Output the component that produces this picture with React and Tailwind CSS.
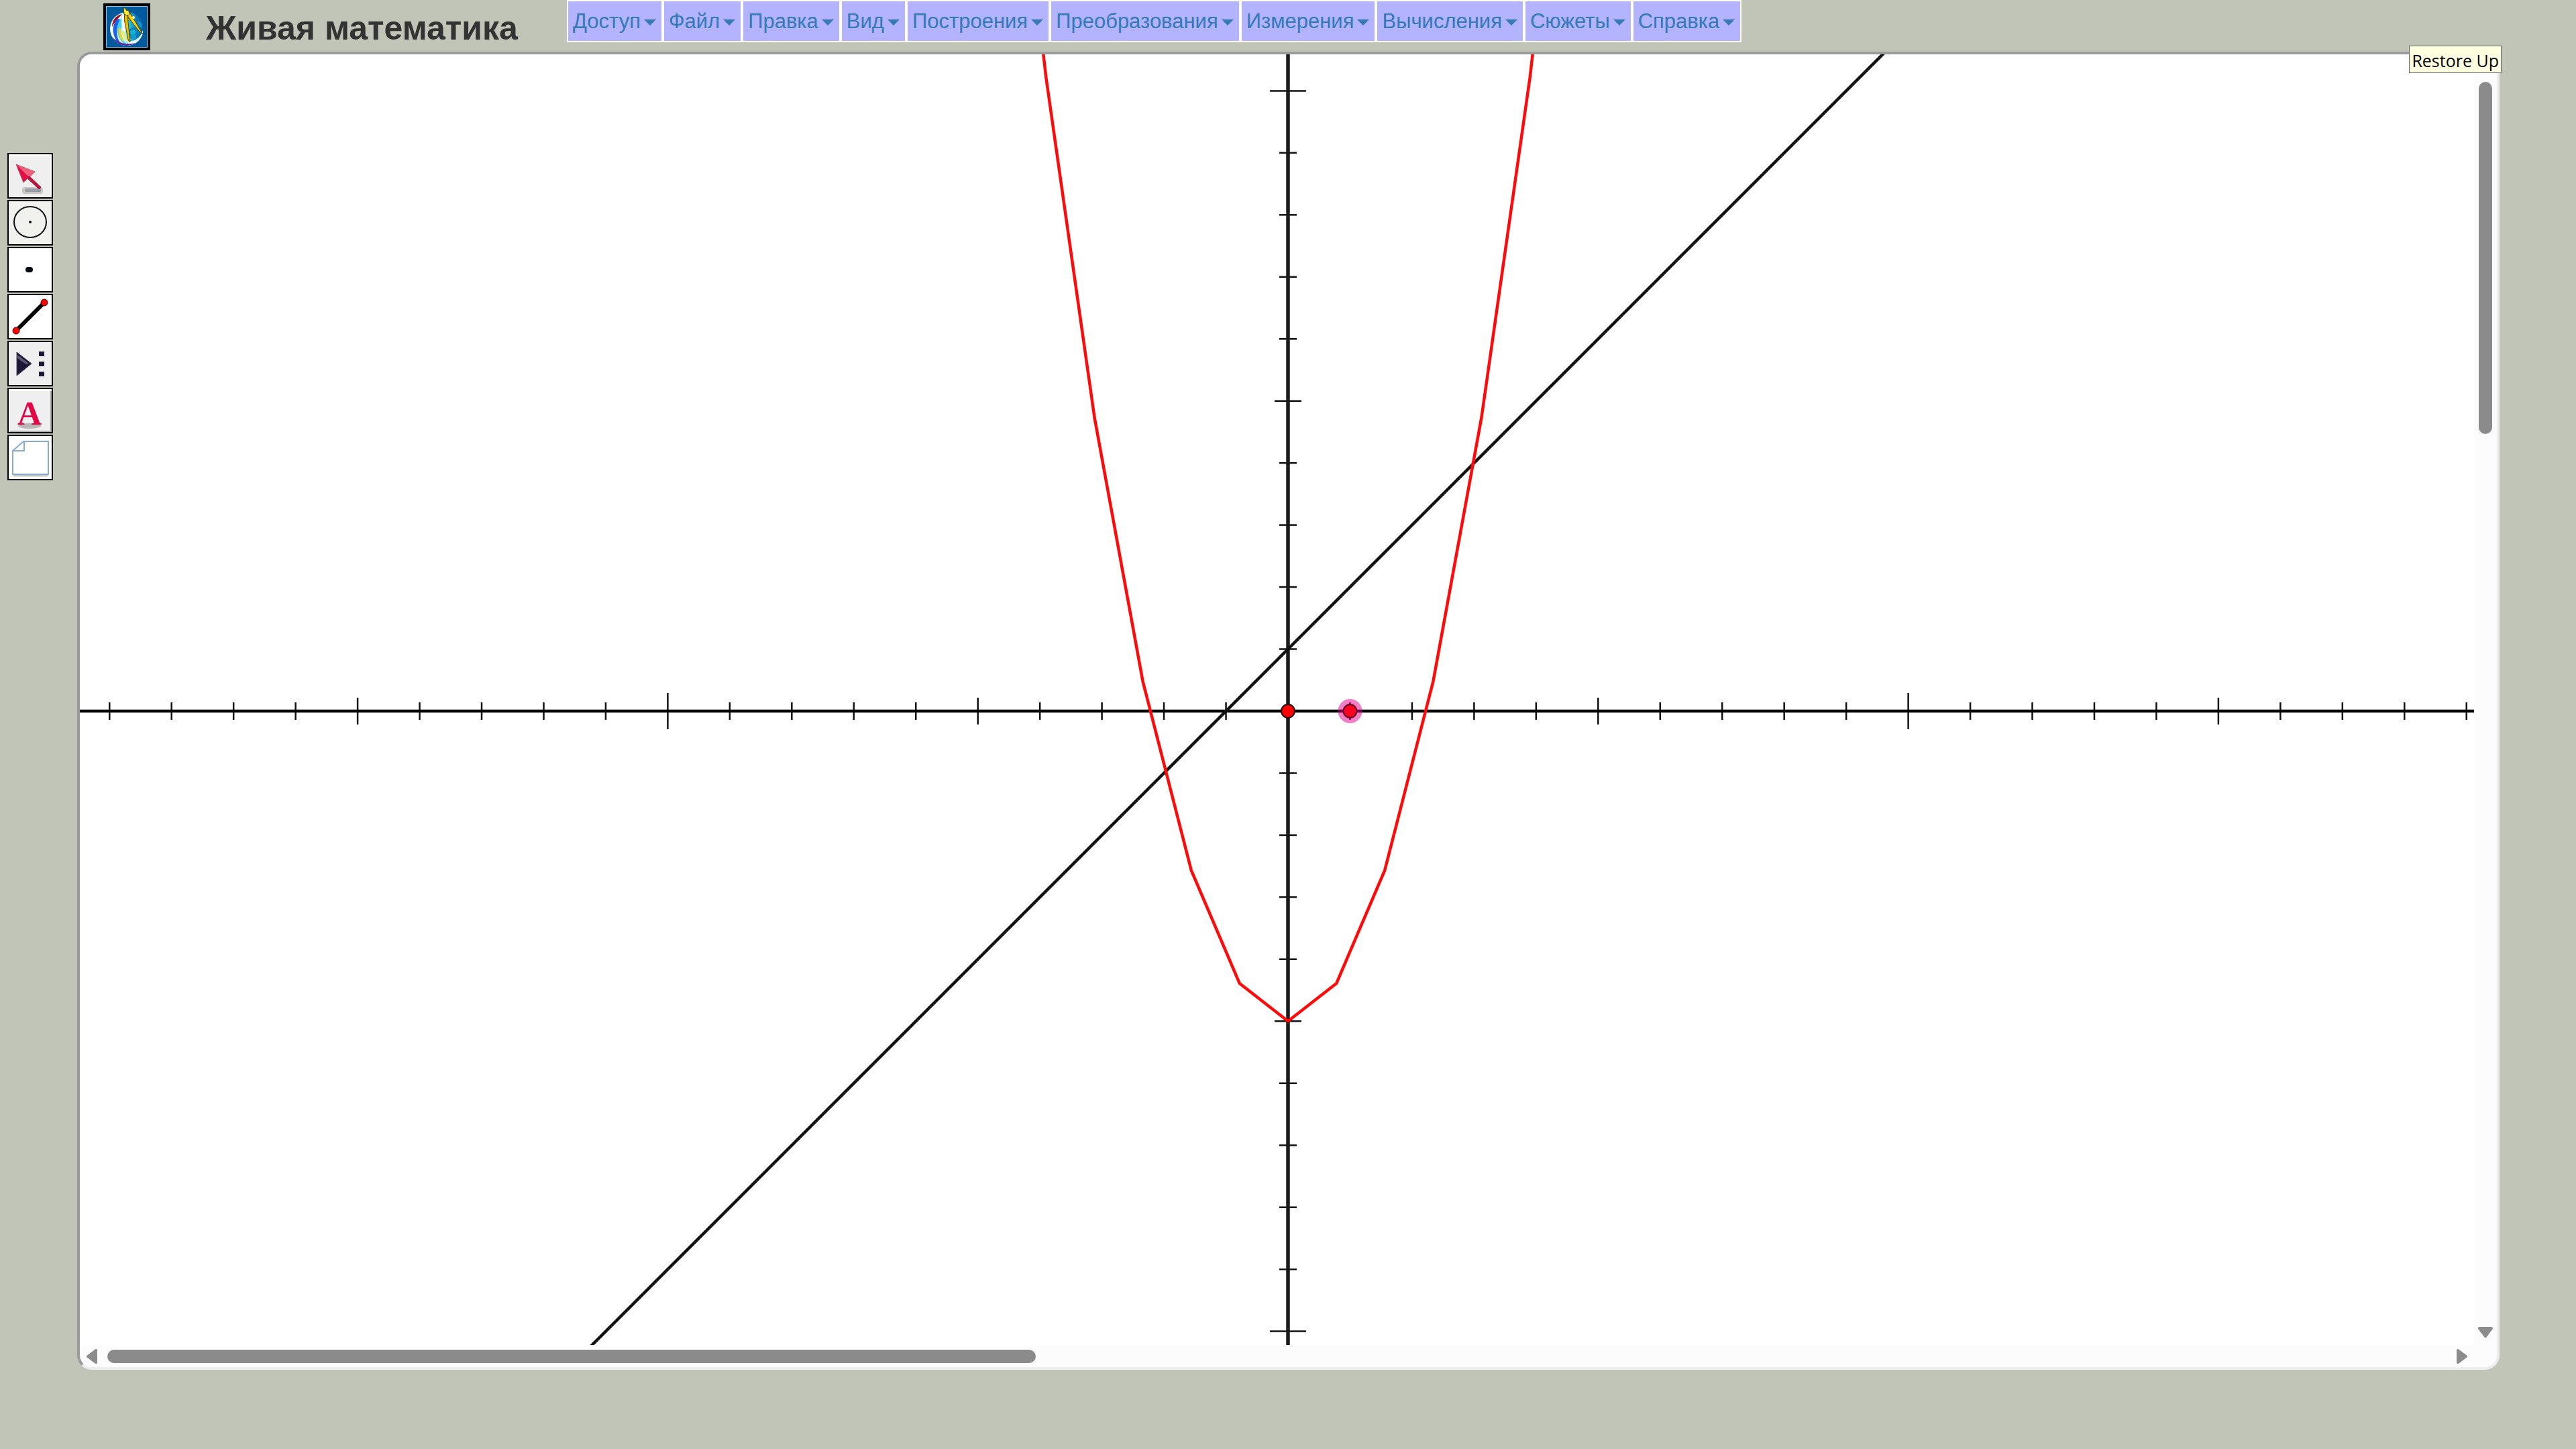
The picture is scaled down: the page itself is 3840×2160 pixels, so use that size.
import React from 'react';

const MENUS = ['Доступ', 'Файл', 'Правка', 'Вид', 'Построения', 'Преобразования', 'Измерения', 'Вычисления', 'Сюжеты', 'Справка'];

// Plane geometry, in sketch pixels
const WIDTH = 3569;
const HEIGHT = 1924;
const ORIGIN = { x: 1801, y: 979 };
const UNIT = 92.46;

const toX = (x) => ORIGIN.x + x * UNIT;
const toY = (y) => ORIGIN.y - y * UNIT;

const range = (from, to) => Array.from({ length: to - from + 1 }, (_, i) => from + i);

const tickSize = (n) => {
  if (n % 10 === 0) return 27;
  if (n % 5 === 0) return 20;
  return 13;
};

const PARABOLA = range(-6, 6)
  .map((k) => k * 0.78)
  .map((x) => `${toX(x)},${toY(x * x - 5)}`)
  .join(' ');

function Graph() {
  return (
    <svg viewBox={`0 0 ${WIDTH} ${HEIGHT}`} className="block w-full h-full" role="img" aria-label="y = x² − 5, y = x + 1">
      <g stroke="#111" strokeWidth="2.5">
        {range(-19, 19).filter((n) => n !== 0).map((n) => (
          <line key={n} x1={toX(n)} x2={toX(n)} y1={ORIGIN.y - tickSize(n)} y2={ORIGIN.y + tickSize(n)} />
        ))}
        {range(-10, 10).filter((n) => n !== 0).map((n) => (
          <line key={n} x1={ORIGIN.x - tickSize(n)} x2={ORIGIN.x + tickSize(n)} y1={toY(n)} y2={toY(n)} />
        ))}
      </g>
      <line x1="0" x2={WIDTH} y1={ORIGIN.y} y2={ORIGIN.y} stroke="#000" strokeWidth="4.5" />
      <line x1={ORIGIN.x} x2={ORIGIN.x} y1="0" y2={HEIGHT} stroke="#1a1a1a" strokeWidth="5.5" />
      <line x1={toX(-12)} y1={toY(-11)} x2={toX(11)} y2={toY(12)} stroke="#111" strokeWidth="4.5" />
      <polyline points={PARABOLA} fill="none" stroke="#ff0a0a" strokeWidth="4.5" strokeLinejoin="round" />
      <circle cx={ORIGIN.x} cy={ORIGIN.y} r="10" fill="#f00" stroke="#200" strokeWidth="2" />
      {/* Selected unit point */}
      <circle cx={toX(1)} cy={ORIGIN.y} r="10" fill="#f02" stroke="#300" strokeWidth="2" />
      <circle cx={toX(1)} cy={ORIGIN.y} r="14" fill="none" stroke="#e6008c" strokeOpacity="0.5" strokeWidth="8" />
    </svg>
  );
}

function Logo() {
  return (
    <svg viewBox="0 0 62 62" className="block w-full h-full" aria-hidden="true">
      <defs>
        <clipPath id="ball-clip">
          <circle cx="31" cy="34" r="25" />
        </clipPath>
        <linearGradient id="ball" x1="0" y1="0.4" x2="1" y2="0.3">
          <stop offset="0" stopColor="#fff" />
          <stop offset="0.4" stopColor="#c8f4fa" />
          <stop offset="0.6" stopColor="#22b4dc" />
          <stop offset="0.85" stopColor="#0a6fb0" />
          <stop offset="1" stopColor="#005a9c" />
        </linearGradient>
      </defs>
      <rect width="62" height="62" fill="#005a9c" />
      <rect x="0.5" y="0.5" width="61" height="61" fill="none" stroke="#8cc4e8" />
      <g clipPath="url(#ball-clip)">
        <rect x="6" y="9" width="50" height="50" fill="url(#ball)" />
        <path d="M20 13C12 17 9 24 9 31C13 23 18 19 24 12Z" fill="#a01020" />
        <path d="M17 19C9 27 8 42 17 53L22 56C15 46 14 34 21 20Z" fill="#1c62f0" />
        <path d="M21 20C14 32 16 46 26 56L30 56C22 47 20 36 27 18Z" fill="#40d4f0" />
        <path d="M19 33C18 42 21 50 27 54C24 46 22 41 22 33Z" fill="#f8d020" />
        <path d="M24 38C24 46 28 52 36 54C31 48 28 44 27 36Z" fill="#e8f070" />
        <path d="M26 12C22 20 22 28 27 38L30 36L28 12Z" fill="#fff" />
        <path d="M32 52C44 54 52 46 55 36C57 48 48 60 34 59Z" fill="#e6fbfa" />
        <path d="M9 46C14 60 34 62 44 55C34 58 20 57 9 46Z" fill="#5a1fa0" />
        <circle cx="41" cy="41" r="9" fill="#0a7cba" />
        <circle cx="40" cy="39" r="4" fill="#14b4d6" />
        <circle cx="41" cy="46" r="4" fill="#109ccc" />
        <path d="M47 22L53 25L54 33L49 30Z" fill="#1590cc" />
      </g>
      <path d="M27 23L42 16" stroke="#4d4300" strokeWidth="3" />
      <path d="M27 23L42 16" stroke="#ffe21a" strokeWidth="1.5" />
      <path d="M29 10L35 9L44 24L55 42L49 37L38 23Z" fill="#f5d50a" stroke="#4d4300" strokeWidth="1" />
      <path d="M27 9L32 10L33 24L36 53L35 54L33 50L28 24Z" fill="#e8c408" stroke="#4d4300" strokeWidth="1" />
      <path d="M26 3L29 3L30 6L34 7L35 13L31 14L27 12Z" fill="#ffe83a" stroke="#4d4300" strokeWidth="1" />
      <circle cx="41" cy="17" r="2" fill="#fff7b0" />
    </svg>
  );
}

const TOOLS = [
  {
    name: 'Стрелка',
    art: (
      <>
        <rect width="64" height="64" fill="#fff" />
        <rect x="2" y="3" width="60" height="59" fill="#efefef" />
        <rect x="20" y="49" width="31" height="10" rx="4" fill="#c9c6c2" />
        <rect x="24" y="51" width="24" height="5" rx="2" fill="#9a9cab" />
        <path d="M29 31L48 49L46 52L43 50L27 35Z" fill="#c8103f" stroke="#7d2038" strokeWidth="1" />
        <path d="M11 15L39 26L33 32L28 36L22 42Z" fill="#e40d45" stroke="#b04a60" strokeWidth="1" />
        <path d="M11 15L39 26L33 32L28 32Z" fill="#f2607c" />
      </>
    ),
  },
  {
    name: 'Циркуль',
    art: (
      <>
        <rect width="64" height="64" fill="#f1f2ed" />
        <ellipse cx="32" cy="31" rx="24" ry="23" fill="none" stroke="#0a1216" strokeWidth="2" />
        <circle cx="32" cy="31" r="2" fill="#0a1216" />
      </>
    ),
  },
  {
    name: 'Точка',
    art: (
      <>
        <rect width="64" height="64" fill="#fff" />
        <rect x="25" y="28" width="11" height="8" rx="4" fill="#000a10" />
      </>
    ),
  },
  {
    name: 'Отрезок',
    art: (
      <>
        <rect width="64" height="64" fill="#fff" />
        <path d="M11 53L53 11" stroke="#000" strokeWidth="6" />
        <circle cx="11" cy="53" r="5" fill="#f00" stroke="#300" />
        <circle cx="53" cy="11" r="5" fill="#f00" stroke="#300" />
      </>
    ),
  },
  {
    name: 'Инструменты пользователя',
    art: (
      <>
        <rect width="64" height="64" fill="#efefef" />
        <path d="M12 15L34 32L12 50Z" fill="#1c1738" stroke="#4a465c" strokeWidth="1" />
        <path d="M13 19L30 32L26 33L13 24Z" fill="#5d5a72" />
        <rect x="45" y="14" width="8" height="7" fill="#1c1738" />
        <rect x="45" y="29" width="8" height="7" fill="#1c1738" />
        <rect x="45" y="44" width="8" height="7" fill="#1c1738" />
      </>
    ),
  },
  {
    name: 'Текст',
    art: (
      <>
        <rect width="64" height="64" fill="#fff" />
        <rect x="2" y="3" width="60" height="59" fill="#efefef" />
        <path d="M63 3V63H2" fill="none" stroke="#aaa" strokeWidth="2" />
        <ellipse cx="31" cy="55" rx="17" ry="4" fill="#b9b8b8" />
        <text x="31" y="53" textAnchor="middle" fontFamily="Liberation Serif, serif" fontWeight="bold" fontSize="50" fill="#e40545">A</text>
      </>
    ),
  },
  {
    name: 'Страница',
    art: (
      <>
        <rect width="64" height="64" fill="#fff" />
        <path d="M7 59H58" stroke="#c8c8c8" strokeWidth="3" />
        <path d="M22 8H59V57H6V22Z" fill="#fff" stroke="#88a9d2" strokeWidth="2" />
        <path d="M23 8V22H6" fill="none" stroke="#88a9d2" strokeWidth="2" />
      </>
    ),
  },
];

function ArrowButton({ label, d, viewBox, className }) {
  return (
    <button type="button" aria-label={label} className={className}>
      <svg viewBox={viewBox} className="block w-full h-full">
        <path d={d} fill="#8b8b8b" stroke="#8b8b8b" strokeWidth="4" strokeLinejoin="round" />
      </svg>
    </button>
  );
}

export default function App() {
  return (
    <div className="flex flex-col min-h-screen bg-[#c1c5b7] text-[#333] font-['Liberation_Sans',Arial,sans-serif]">
      <header className="flex items-start h-[77px] pl-[154px]">
        <div className="w-[70px] h-[70px] mt-[5px] border-4 border-black shrink-0">
          <Logo />
        </div>
        <h1 className="ml-[83px] mt-3 w-[538px] shrink-0 text-[50px] leading-[60px] font-bold whitespace-nowrap">Живая математика</h1>
        <nav className="flex">
          {MENUS.map((menu) => (
            <button
              key={menu}
              type="button"
              className="flex items-center gap-[5px] h-[63px] pl-[7px] pr-2 border-2 border-white bg-[#b3b3ff] text-[#337ab7] text-[31px] leading-[44px] whitespace-nowrap"
            >
              {menu}
              <span className="mt-1 border-x-[9px] border-t-[9px] border-x-transparent border-t-[#337ab7]" />
            </button>
          ))}
        </nav>
      </header>

      <div className="flex flex-1 pr-[114px] pb-[118px]">
        {/* Tool palette */}
        <aside className="flex flex-col gap-[2px] w-[115px] shrink-0 pt-[151px] pl-[11px]">
          {TOOLS.map((tool) => (
            <button key={tool.name} type="button" aria-label={tool.name} className="w-[68px] h-[68px] border-2 border-black">
              <svg viewBox="0 0 64 64" className="block w-full h-full overflow-visible">{tool.art}</svg>
            </button>
          ))}
        </aside>

        {/* Sketch window */}
        <main className="relative flex flex-col flex-1 min-w-0">
          <div className="flex flex-col flex-1 overflow-hidden rounded-[22px] border-4 border-t-[#9a9a9a] border-l-[#9a9a9a] border-r-[#ededed] border-b-[#ededed] bg-[#fcfcfc]">
            <div className="flex flex-1">
              <div className="flex-1 min-w-0 bg-white">
                <Graph />
              </div>
              <div className="flex flex-col items-center w-[34px] shrink-0 pt-[41px] pb-[11px]">
                <div className="flex-1 w-5 mb-[14px]">
                  <div className="w-5 h-[28.5%] rounded-full bg-[#8b8b8b]" />
                </div>
                <ArrowButton label="Вниз" viewBox="0 0 22 16" d="M2 2H20L11 14Z" className="w-[22px] h-4" />
              </div>
            </div>
            <div className="flex items-center h-[33px] shrink-0 pl-[10px] pr-[44px]">
              <ArrowButton label="Влево" viewBox="0 0 16 22" d="M14 2V20L2 11Z" className="w-4 h-[22px]" />
              <div className="flex-1 h-5 mx-[15px]">
                <div className="h-5 w-[39.7%] rounded-full bg-[#8b8b8b]" />
              </div>
              <ArrowButton label="Вправо" viewBox="0 0 16 22" d="M2 2V20L14 11Z" className="w-4 h-[22px]" />
            </div>
          </div>
          <div role="tooltip" className="absolute -top-[9px] -right-[3px] h-[41px] px-[3px] border border-[#646464] bg-[#ffffe1] text-black text-[25px] leading-[42px] whitespace-nowrap font-['Open_Sans','Noto_Sans',sans-serif]">
            Restore Up
          </div>
        </main>
      </div>
    </div>
  );
}
